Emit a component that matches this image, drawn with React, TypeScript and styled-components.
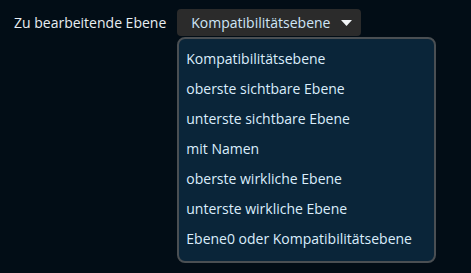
import React from "react";
import styled, { createGlobalStyle } from "styled-components";

const GlobalStyle = createGlobalStyle`
  html, body {
    margin: 0;
    padding: 0;
    background-color: #020d16;
  }
  body {
    font-family: "Open Sans", "Noto Sans", sans-serif;
    color: #e6edf3;
  }
`;

const Wrapper = styled.div`
  width: 471px;
  height: 273px;
  background-color: #020d16;
  padding: 9px 0 0 14px;
  box-sizing: border-box;
`;

const Row = styled.div`
  display: flex;
  align-items: flex-start;
`;

const Label = styled.span`
  font-size: 14px;
  line-height: 27px;
  color: #e8eef2;
  margin-right: 11px;
  white-space: nowrap;
`;

const SelectWrap = styled.div`
  position: relative;
`;

const SelectButton = styled.button`
  display: flex;
  align-items: center;
  height: 27px;
  width: 184px;
  padding: 0 0 0 14px;
  box-sizing: border-box;
  border: none;
  border-radius: 4px;
  background-color: #2b2b2b;
  color: #cfe6f7;
  font-family: inherit;
  font-size: 14px;
  cursor: pointer;
  white-space: nowrap;
`;

const Caret = styled.svg`
  margin-left: 11px;
  width: 11px;
  height: 6px;
  flex-shrink: 0;
`;

const Menu = styled.ul`
  position: absolute;
  top: 28px;
  left: 0;
  width: 259px;
  margin: 0;
  padding: 5px 0 7px;
  box-sizing: border-box;
  list-style: none;
  background-color: #0a2539;
  border: 2px solid #4a4f53;
  border-radius: 8px;
`;

const Item = styled.li`
  padding: 0 0 0 7px;
  height: 30px;
  line-height: 30px;
  font-size: 14px;
  color: #dbeefc;
  white-space: nowrap;
`;

const options = [
  "Kompatibilitätsebene",
  "oberste sichtbare Ebene",
  "unterste sichtbare Ebene",
  "mit Namen",
  "oberste wirkliche Ebene",
  "unterste wirkliche Ebene",
  "Ebene0 oder Kompatibilitätsebene",
];

function App() {
  return (
    <Wrapper>
      <GlobalStyle />
      <Row>
        <Label>Zu bearbeitende Ebene</Label>
        <SelectWrap>
          <SelectButton>
            Kompatibilitätsebene
            <Caret viewBox="0 0 11 6">
              <path d="M0 0 H11 L5.5 6 Z" fill="#f2f6f8" />
            </Caret>
          </SelectButton>
          <Menu>
            {options.map((o) => (
              <Item key={o}>{o}</Item>
            ))}
          </Menu>
        </SelectWrap>
      </Row>
    </Wrapper>
  );
}

export default App;
